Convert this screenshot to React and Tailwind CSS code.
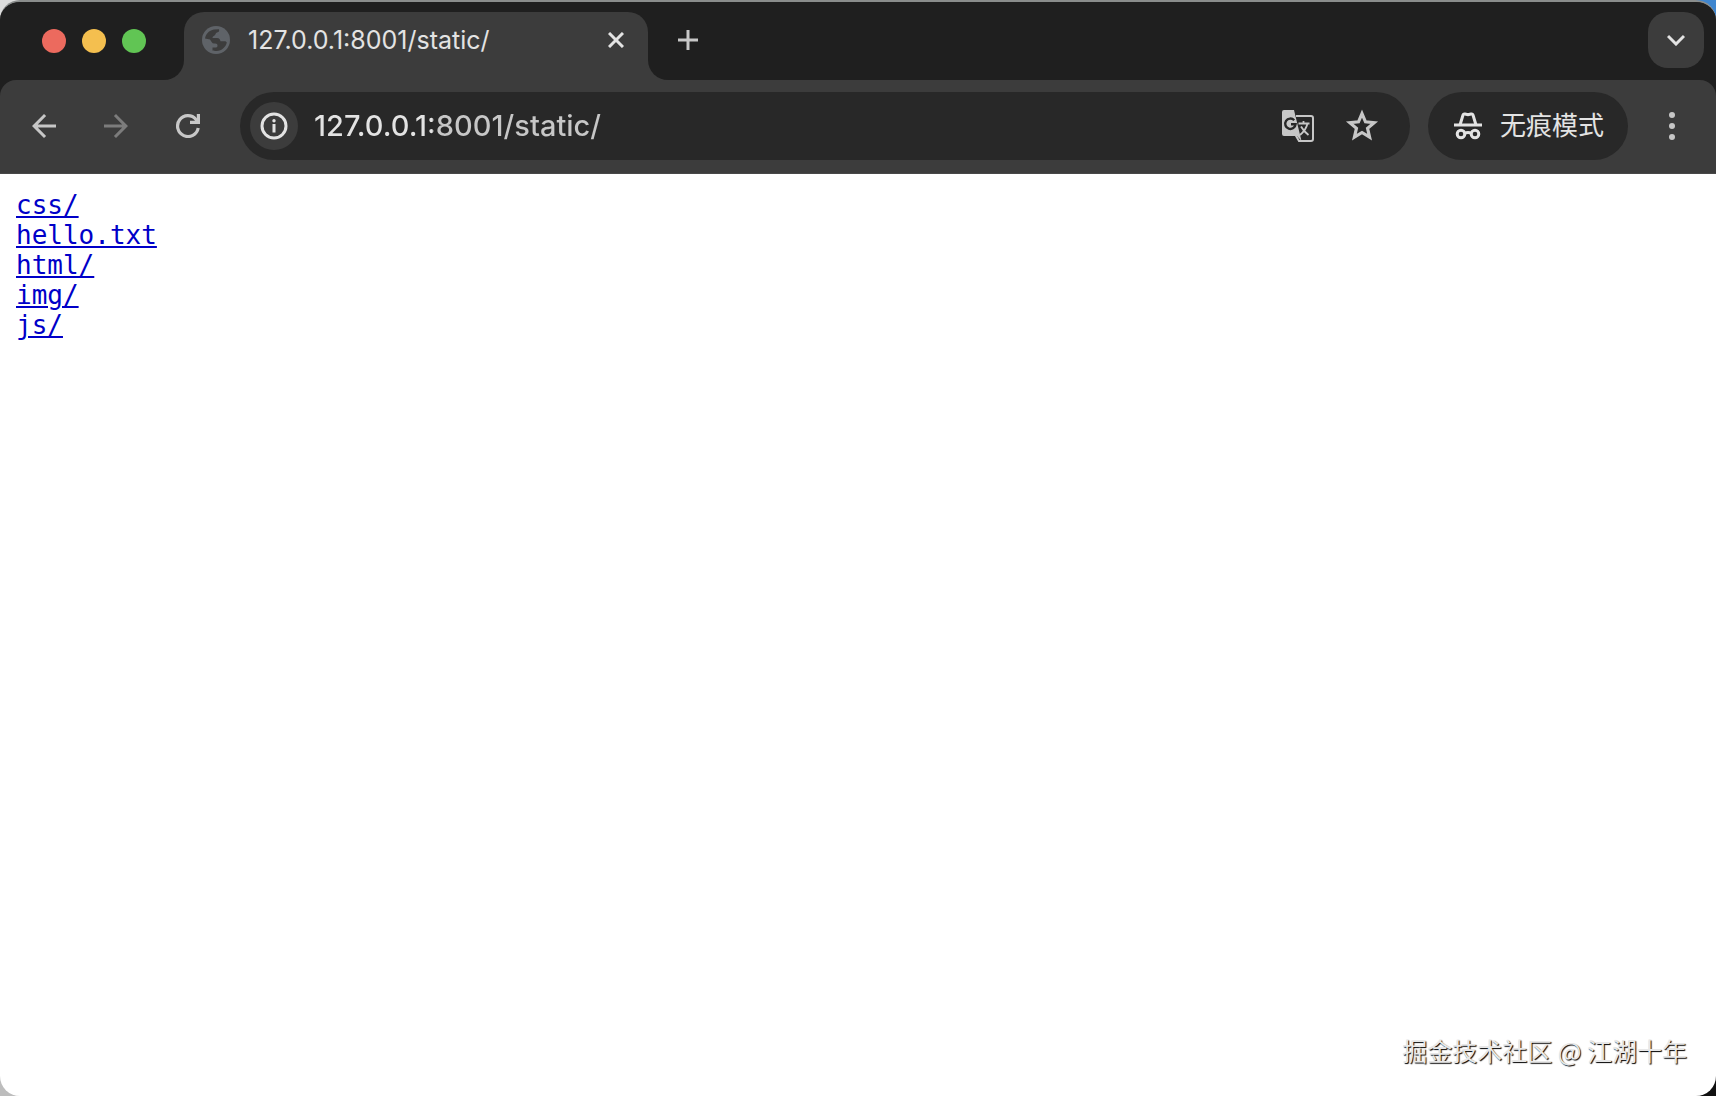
import { MdArrowBack, MdArrowForward } from 'react-icons/md'

const files = ['css/', 'hello.txt', 'html/', 'img/', 'js/']

function GlobeIcon() {
  return (
    <svg viewBox="0 0 28 28" className="w-7 h-7 shrink-0" aria-hidden="true">
      <circle cx="14" cy="14" r="14" fill="#5f6368" />
      <path
        fill="#3c3c3c"
        d="M3 12.5C3.600 8 7 4.300 12 3.400L17 3.200C17.500 5 17 6 15 6.500C13.500 7 13.800 8.500 12.500 9.500C11.500 10.300 10.500 10.500 10.500 12H15C17.500 12 18 13.500 18.500 15.200H22.500C23.500 15.200 24.300 15.600 24.800 16.500C23.800 21 20 24.800 14.500 25C12.500 25 11.500 24.800 10.500 24.500V21.500H14C15 21.500 15.500 20.800 15.500 19.500C15.500 17.500 13.500 17.500 12 17.500C10 17.500 9.500 15.500 8 13.500Z"
      />
    </svg>
  )
}

function ReloadIcon() {
  return (
    <svg viewBox="0 0 24 24" className="w-6 h-6" fill="none" stroke="currentColor" strokeWidth="3.200" aria-hidden="true">
      <path d="M22.200 14A10.400 10.400 0 1 1 20 5.500L22 8.500" />
      <path d="M22.400 0V8.400H14" />
    </svg>
  )
}

function InfoIcon() {
  return (
    <svg viewBox="0 0 28 28" className="w-7 h-7" aria-hidden="true">
      <circle cx="14" cy="14" r="12" fill="none" stroke="#e3e3e3" strokeWidth="3" />
      <circle cx="14" cy="8.800" r="1.700" fill="#e3e3e3" />
      <rect x="12.500" y="12" width="3" height="8.500" fill="#e3e3e3" />
    </svg>
  )
}

function TranslateIcon() {
  return (
    <svg viewBox="0 0 34 34" className="w-[34px] h-[34px]" fill="none" aria-hidden="true">
      <path d="M15 7H30Q32 7 32 9V30Q32 32 30 32H18L14.500 26" stroke="#c7c7c7" strokeWidth="2" />
      <path d="M3 1H13L20.500 32L16 27H3Q1 27 1 25V3Q1 1 3 1Z" fill="#c7c7c7" />
      <path d="M13.200 11.200A5.200 5.200 0 1 0 14.600 15.200H10" stroke="#282828" strokeWidth="2.400" />
      <path d="M17.500 14.500H28.500M22.500 12V14.500M26.500 14.500Q25 21 19 26M20 17.500Q22.500 22 27.500 26" stroke="#c7c7c7" strokeWidth="1.800" />
    </svg>
  )
}

function StarIcon() {
  return (
    <svg viewBox="0 0 24 24" className="h-[38px] w-[38px]" fill="none" stroke="currentColor" strokeWidth="2" aria-hidden="true">
      <path d="M12 4.200L14.200 9.400L19.700 9.900L15.500 13.500L16.800 19L12 16.100L7.200 19L8.500 13.500L4.300 9.900L9.800 9.400Z" />
    </svg>
  )
}

function IncognitoIcon() {
  return (
    <svg viewBox="0 0 28 28" className="w-7 h-7 shrink-0" fill="none" stroke="#e3e3e3" strokeWidth="3" aria-hidden="true">
      <path d="M0 13H28" />
      <path d="M6 13L9 3Q9.500 1.600 11 2L14 2.800L17 2Q18.500 1.600 19 3L22 13" />
      <circle cx="7" cy="22" r="3.800" />
      <circle cx="21" cy="22" r="3.800" />
      <path d="M10.500 21.500Q14 19.500 17.500 21.500" />
    </svg>
  )
}

function TabStrip() {
  return (
    <div className="flex h-[78px] bg-[#3c3c3c]">
      <div className="flex w-[184px] shrink-0 items-center gap-4 rounded-br-[20px] bg-[#1f1f1f] pl-[42px]">
        <button aria-label="Close window" className="h-6 w-6 rounded-full bg-[#ec6a5e]" />
        <button aria-label="Minimize window" className="h-6 w-6 rounded-full bg-[#f4bf4f]" />
        <button aria-label="Zoom window" className="h-6 w-6 rounded-full bg-[#61c554]" />
      </div>

      <div className="w-[464px] bg-[#1f1f1f] pt-[10px]">
        <div className="flex h-full items-start rounded-t-[20px] bg-[#3c3c3c] pl-[18px] pr-5 pt-[14px]">
          <GlobeIcon />
          <span className="ml-[18px] flex-1 text-[25px] leading-7 text-[#e3e3e3]">127.0.0.1:8001/static/</span>
          <button aria-label="Close tab" className="flex h-7 w-6 items-center justify-center">
            <svg viewBox="0 0 16 16" className="h-4 w-4" stroke="#e3e3e3" strokeWidth="3">
              <path d="M1 1L15 15M15 1L1 15" />
            </svg>
          </button>
        </div>
      </div>

      <div className="flex flex-1 items-start justify-between rounded-bl-[20px] bg-[#1f1f1f] pl-[30px] pr-3 pt-[10px]">
        <button aria-label="New tab" className="flex h-14 w-5 items-center justify-center">
          <svg viewBox="0 0 20 20" className="h-5 w-5" stroke="#c7c7c7" strokeWidth="3">
            <path d="M10 0V20M0 10H20" />
          </svg>
        </button>
        <button aria-label="Search tabs" className="flex h-14 w-14 items-center justify-center rounded-[20px] bg-[#3c3c3c]">
          <svg viewBox="0 0 18 12" className="h-3 w-[18px]" fill="none" stroke="#e3e3e3" strokeWidth="3">
            <path d="M1 2L9 10L17 2" />
          </svg>
        </button>
      </div>
    </div>
  )
}

function Toolbar() {
  return (
    <div className="bg-[#1f1f1f]">
      <div className="flex h-[94px] items-center rounded-t-[16px] border-b border-[#484848] bg-[#3c3c3c] px-[26px] pb-px">
        <div className="flex items-center gap-9 text-[#c7c7c7]">
          <button aria-label="Back">
            <MdArrowBack className="h-9 w-9" />
          </button>
          <button aria-label="Forward" className="text-[#7c7c7c]">
            <MdArrowForward className="h-9 w-9" />
          </button>
          <button aria-label="Reload" className="flex h-9 w-9 items-center justify-center">
            <ReloadIcon />
          </button>
        </div>

        <div className="ml-[34px] flex h-[68px] flex-1 items-center rounded-full bg-[#282828] pl-[10px] pr-[29px]">
          <button aria-label="Site information" className="flex h-12 w-12 items-center justify-center rounded-full bg-[#3c3c3c]">
            <InfoIcon />
          </button>
          <input
            type="text"
            aria-label="Address"
            defaultValue="127.0.0.1:8001/static/"
            className="ml-4 min-w-0 flex-1 bg-[linear-gradient(90deg,#e3e3e3_118px,#c7c7c7_118px)] bg-clip-text text-[29px] font-medium leading-9 text-transparent outline-none"
          />
          <div className="flex items-center gap-7 text-[#c7c7c7]">
            <button aria-label="Translate this page">
              <TranslateIcon />
            </button>
            <button aria-label="Bookmark this tab">
              <StarIcon />
            </button>
          </div>
        </div>

        <button className="ml-[18px] flex h-[68px] w-[200px] items-center gap-[18px] rounded-full bg-[#282828] pl-[26px] text-[26px] leading-8 text-[#e3e3e3]">
          <IncognitoIcon />
          无痕模式
        </button>
        <button aria-label="Menu" className="ml-[26px] flex h-9 w-9 items-center justify-center">
          <svg viewBox="0 0 6 28" className="h-7 w-[6px]" fill="#c7c7c7">
            <circle cx="3" cy="3" r="3" />
            <circle cx="3" cy="14" r="3" />
            <circle cx="3" cy="25" r="3" />
          </svg>
        </button>
      </div>
    </div>
  )
}

function App() {
  return (
    <div className="flex min-h-screen bg-[conic-gradient(#3f86cf_25%,#111_25%_50%,#bdbdbd_50%_75%,#dcdcdc_75%)] font-['Inter','Noto_Sans_CJK_SC',sans-serif]">
      <div className="flex flex-1 flex-col overflow-hidden rounded-[20px] border-t-2 border-[#8a8d8c] bg-white">
        <TabStrip />
        <Toolbar />

        <main className="flex flex-1 flex-col justify-between">
          <ul className="px-4 pt-4 font-['DejaVu_Sans_Mono',monospace] text-[26px] leading-[30px] text-[#0000c8]">
            {files.map((file) => (
              <li key={file}>
                <a href={file} className="underline decoration-2 underline-offset-2">{file}</a>
              </li>
            ))}
          </ul>
          <p className="pb-7 pr-[29px] text-right font-['Noto_Sans_CJK_SC',sans-serif] text-[25px] leading-9 text-[#e8e8e8] [text-shadow:1px_1px_1px_#000]">
            掘金技术社区 @ 江湖十年
          </p>
        </main>
      </div>
    </div>
  )
}

export default App
